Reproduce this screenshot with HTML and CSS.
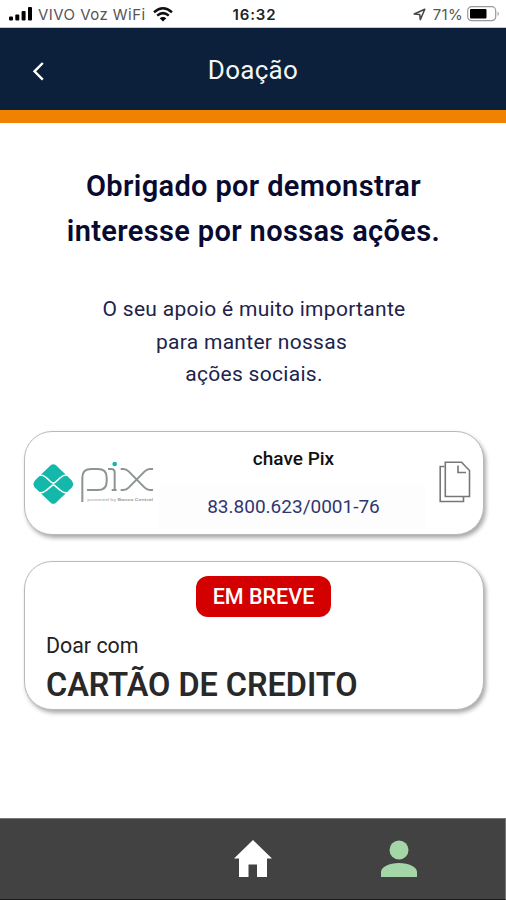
FILE: index.html
```html
<!DOCTYPE html>
<html lang="pt-BR">
<head>
<meta charset="utf-8">
<title>Doação</title>
<link rel="stylesheet" href="styles.css">
</head>
<body>
<div class="screen">
  <div class="status">
    <div class="status-left">
      <svg class="signal" width="23" height="14" viewBox="0 0 23 14"><rect x="0" y="9.5" width="4" height="4" rx="1"/><rect x="6.3" y="7.5" width="4" height="6" rx="1"/><rect x="12.6" y="4" width="4" height="9.500" rx="1"/><rect x="19" y="0" width="4" height="13.500" rx="1"/></svg>
      <span class="carrier">VIVO Voz WiFi</span>
      <svg class="wifi" width="20" height="15" viewBox="0 0 20 15"><g fill="none" stroke="#111" stroke-width="2.500"><path d="M1 5.200Q10-2.600 19 5.200"/><path d="M4.200 8.600Q10 3.600 15.800 8.600"/></g><path d="M6.700 11.300Q10 8.700 13.300 11.300L10 14.600Z"/></svg>
    </div>
    <span class="clock">16:32</span>
    <div class="status-right">
      <svg class="location" width="13" height="13" viewBox="0 0 13 13"><path d="M1.200 6 11.800 1.200 7.300 11.600 6.700 6.400Z" fill="none" stroke="#444" stroke-width="1.500" stroke-linejoin="round"/></svg>
      <span class="percent">71%</span>
      <svg class="battery" width="33" height="16" viewBox="0 0 33 16"><rect x=".7" y=".7" width="28" height="14" rx="4" fill="none" stroke="#999" stroke-width="1.200"/><rect x="3" y="3" width="16.500" height="9.500" rx="1"/><path d="M30.500 5.500Q33.500 7.700 30.500 10Z" fill="#aaa"/></svg>
    </div>
  </div>
  <header class="header">
    <svg class="back" width="14" height="20" viewBox="0 0 14 20"><path d="M11.800 2 3.500 10.300l8.300 8.300" fill="none" stroke="#fff" stroke-width="2.400"/></svg>
    <h1 class="title">Doação</h1>
  </header>
  <main class="content">
    <h2 class="thanks">Obrigado por demonstrar<br>interesse por nossas ações.</h2>
    <p class="support">O seu apoio é muito importante<br><span class="middle">para manter nossas</span><br>ações sociais.</p>
    <section class="card pix">
      <svg class="pix-logo" width="122" height="44" viewBox="54 120 366 132">
        <path d="M107 136q8-7 16 0l42 40q20 16 0 32l-42 40q-8 7-16 0l-42-40q-20-16 0-32Z" fill="#13b8aa"/>
        <path d="M62 165H75Q86 165 94 173L108 186Q115 193 122 186L136 173Q144 165 155 165H168M62 219H75Q86 219 94 211L108 199Q115 192 122 199L136 211Q144 219 155 219H168" fill="none" stroke="#fff" stroke-width="4.500"/>
        <g fill="none" stroke="#8d9492" stroke-width="6"><path d="M202 246V172Q202 147 229 147H248Q275 147 275 172V185Q275 210 248 210H216"/><path d="M279 147H289Q299 147 299 158V213M290 210H305"/><path d="M317 147H325Q334 147 341 154L389 203Q396 210 405 210H414M317 210H325Q334 210 341 203L389 154Q396 147 405 147H414"/></g>
        <circle cx="299" cy="132" r="7" fill="#13b8aa"/>
        <text x="217" y="243" textLength="197" lengthAdjust="spacingAndGlyphs" class="powered">powered by <tspan font-weight="700">Banco Central</tspan></text>
      </svg>
      <div class="key">
        <span class="key-label">chave Pix</span>
        <div class="key-field"><span class="key-value">83.800.623/0001-76</span></div>
      </div>
      <svg class="copy" width="32" height="42" viewBox="0 0 32 42"><path d="M5.500 5.500H1.200V40.500H24.500V36" fill="none" stroke="#777" stroke-width="1.600"/><path d="M6.300 1.200H22.500L30.500 9.500V35.500H6.300ZM19 4.500V11.500H27" fill="none" stroke="#777" stroke-width="1.600"/></svg>
    </section>
    <section class="card credit">
      <div class="badge"><span>EM BREVE</span></div>
      <p class="donate">Doar com</p>
      <h3 class="method">CARTÃO DE CREDITO</h3>
    </section>
  </main>
  <nav class="nav">
    <svg class="home" width="38" height="37" viewBox="0 0 38 37"><path d="M19 0 38 18.500H33V37H23V24.500H14.500V37H5V18.500H0Z" fill="#fff"/></svg>
    <svg class="user" width="38" height="38" viewBox="0 0 38 38"><circle cx="19" cy="10" r="9.500"/><path d="M1 37V32C1 27 9 23 19 23S37 27 37 32V37Z"/></svg>
  </nav>
</div>
</body>
</html>
```
FILE: styles.css
```css
* { box-sizing: border-box; }
body { margin: 0; background: #fff; font-family: Roboto, sans-serif; }
h1, h2, h3, p { margin: 0; }
svg { display: block; flex: none; }
span { white-space: nowrap; }
.screen { width: 506px; height: 900px; display: flex; flex-direction: column; overflow: hidden; }
.status { height: 28px; flex: none; display: grid; grid-template-columns: 1fr auto 1fr; align-items: center; padding: 1px 6px 0 9px; font-family: Inter, sans-serif; border-bottom: 1px solid #c5c8ce; }
.status-left { display: flex; align-items: center; }
.carrier { margin-left: 6px; width: 108px; font-size: 15px; letter-spacing: .45px; color: #555; }
.wifi { margin-left: 7px; }
.clock { font-size: 15px; font-weight: 600; letter-spacing: .9px; color: #222; }
.status-right { display: flex; align-items: center; justify-content: flex-end; }
.percent { margin: 0 4px 0 7px; font-size: 15px; letter-spacing: .3px; color: #555; }
.header { height: 95px; flex: none; display: grid; grid-template-columns: 60px 1fr 60px; background: #0c203b; border-bottom: 13px solid #ef8200; align-items: center; }
.back { margin: 3px 0 0 31px; }
.title { padding-top: 2px; text-align: center; color: #f5f5f5; font-size: 26px; font-weight: 400; line-height: 32px; letter-spacing: .3px; }
.content { flex: 1; padding: 41px 22px 0 24px; }
.thanks { text-align: center; font-size: 29px; font-weight: 600; line-height: 45px; letter-spacing: .35px; color: #080a30; margin-right: 1px; }
.support { margin-top: 39px; text-align: center; font-size: 21px; line-height: 32.500px; color: #20234c; letter-spacing: .3px; }
.middle { margin-right: 5px; }
.card { width: 460px; border: 1px solid #b9b9b9; border-radius: 28px; background: #fff; box-shadow: 2px 3px 4px #aaa; }
.pix { height: 104px; margin-top: 40px; display: flex; }
.pix-logo { margin: 28px 0 0 8px; }
.powered { font: 12px Roboto, sans-serif; fill: #a5a5a5; }
.key { margin-left: 4px; width: 266px; display: flex; flex-direction: column; align-items: center; padding-top: 15px; }
.key-label { padding-left: 3px; font-size: 19px; line-height: 24px; color: #111; font-weight: 500; }
.key-field { margin-top: 14px; padding-left: 3px; width: 266px; height: 43px; display: flex; justify-content: center; align-items: center; background: #fdfdfd; color: #303671; font-size: 19px; }
.copy { margin: 29px 0 0 14px; }
.credit { height: 149px; margin-top: 26px; padding: 14px 21px 0; }
.badge { width: 135px; height: 41px; margin-left: 150px; border-radius: 12px; background: #d40000; color: #fff; font-size: 21.500px; font-weight: 500; display: flex; align-items: center; justify-content: center; }
.donate { margin-top: 15px; font-size: 21.400px; line-height: 28px; color: #222; }
.method { margin-top: 6px; font-size: 32.400px; line-height: 38px; font-weight: 600; color: #292929; }
.nav { height: 82px; flex: none; display: flex; background: #424242; border-top: 1px solid #777; border-bottom: 1px solid #1a1a1a; border-right: 1px solid #777; }
.home { margin: 21px 0 0 234px; }
.user { margin: 21px 0 0 108px; fill: #a5d6a7; }
```
